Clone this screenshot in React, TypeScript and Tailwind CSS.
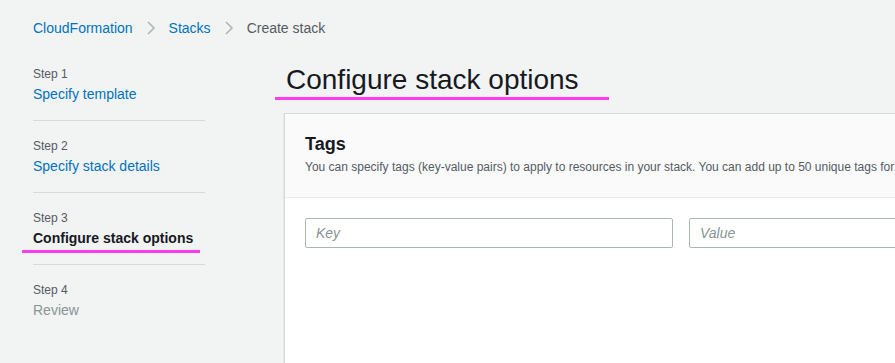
import React from 'react';

const steps = [
  { label: 'Step 1', title: 'Specify template', state: 'done' },
  { label: 'Step 2', title: 'Specify stack details', state: 'done' },
  { label: 'Step 3', title: 'Configure stack options', state: 'active' },
  { label: 'Step 4', title: 'Review', state: 'todo' },
] as const;

function Chevron() {
  return (
    <svg width="10" height="16" viewBox="0 0 10 16" className="mx-[13px]">
      <path d="M2 2l6 6-6 6" fill="none" stroke="#aab7b8" strokeWidth="1.6" />
    </svg>
  );
}

export default function App() {
  return (
    <div
      className="w-[895px] h-[363px] overflow-hidden bg-[#f2f3f3] text-[#16191f]"
      style={{ fontFamily: '"Liberation Sans", Arial, sans-serif' }}
    >
      {/* Breadcrumbs */}
      <div className="flex items-center h-[20px] mt-[18px] pl-[33px] text-[14px]">
        <span className="text-[#0073bb]">CloudFormation</span>
        <Chevron />
        <span className="text-[#0073bb]">Stacks</span>
        <Chevron />
        <span className="text-[#545b64]">Create stack</span>
      </div>

      <div className="flex mt-[28px]">
        {/* Wizard steps */}
        <div className="w-[172px] ml-[33px] shrink-0">
          {steps.map((s, i) => (
            <div
              key={s.label}
              className={
                'relative ' +
                (i < steps.length - 1 ? 'pb-[16px] border-b border-[#d5dbdb] mb-[17px]' : '')
              }
            >
              <div className="text-[12px] leading-[16px] text-[#545b64]">{s.label}</div>
              <div
                className={
                  'text-[14px] leading-[20px] mt-[2px] ' +
                  (s.state === 'done'
                    ? 'text-[#0073bb]'
                    : s.state === 'active'
                      ? 'font-bold text-[#16191f]'
                      : 'text-[#879596]')
                }
              >
                {s.title}
              </div>
              {s.state === 'active' && (
                <span className="absolute left-[-11px] top-[40px] w-[178px] h-[3px] bg-[#ff3cf2]" />
              )}
            </div>
          ))}
        </div>

        {/* Main */}
        <div className="ml-[79px] w-[900px] shrink-0">
          <div className="relative h-[47px]">
            <h1 className="pl-[2px] text-[28px] leading-[28px]">Configure stack options</h1>
            <span className="absolute left-[-9px] top-[31px] w-[334px] h-[3px] bg-[#ff3cf2]" />
          </div>

          <div className="bg-white border-l border-t border-[#d5dbdb] shadow-[0_1px_1px_0_rgba(0,28,36,0.3)] h-[260px]">
            <div className="bg-[#fafafa] border-b border-[#eaeded] px-[20px] pt-[18px] h-[84px]">
              <div className="text-[18px] leading-[24px] font-bold">Tags</div>
              <div className="text-[12px] leading-[16px] text-[#545b64] mt-[3px] whitespace-nowrap">
                You can specify tags (key-value pairs) to apply to resources in your stack. You can add up to 50 unique tags for each stack.
              </div>
            </div>
            <div className="flex gap-[16px] px-[20px] pt-[20px]">
              <input
                placeholder="Key"
                className="w-[368px] h-[30px] border border-[#aab7b8] rounded-[2px] px-[10px] text-[14px] italic placeholder:text-[#879596] bg-white"
              />
              <input
                placeholder="Value"
                className="w-[368px] h-[30px] border border-[#aab7b8] rounded-[2px] px-[10px] text-[14px] italic placeholder:text-[#879596] bg-white"
              />
            </div>
          </div>
        </div>
      </div>
    </div>
  );
}
